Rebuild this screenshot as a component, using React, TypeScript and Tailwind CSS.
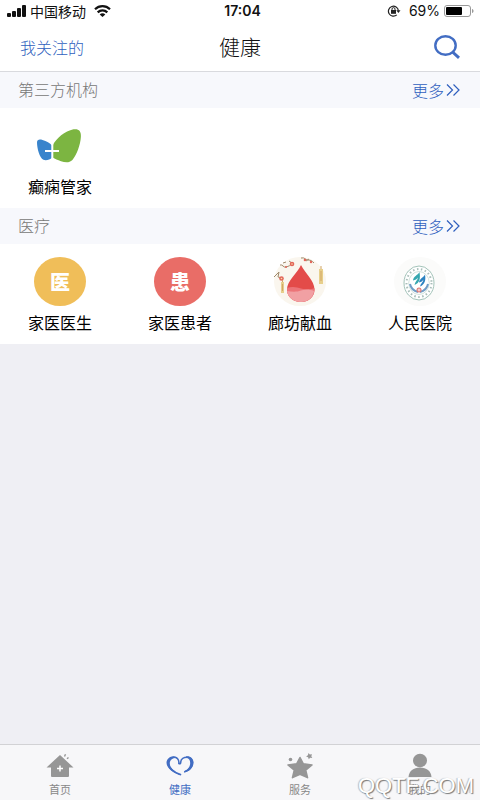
import React from "react";

function SignalIcon() {
  return (
    <svg width="19" height="12" viewBox="0 0 19 12" fill="#111" aria-hidden="true">
      <rect x="0" y="8" width="4" height="4" rx="1" />
      <rect x="5" y="6" width="4" height="6" rx="1" />
      <rect x="10" y="3" width="4" height="9" rx="1" />
      <rect x="15" y="0" width="4" height="12" rx="1" />
    </svg>
  );
}

function WifiIcon() {
  return (
    <svg width="17" height="12" viewBox="0 0 17 12" fill="none" stroke="#111" strokeWidth="2.200" aria-hidden="true">
      <path d="M1 4.200C5.200.1 11.800.1 16 4.200" />
      <path d="M3.700 7.400c2.700-2.700 6.900-2.700 9.600 0" />
      <path d="M8.500 12 5.700 9.400c1.500-1.500 4.100-1.500 5.600 0z" fill="#111" stroke="none" />
    </svg>
  );
}

function RotationLockIcon() {
  return (
    <svg width="14" height="12" viewBox="0 0 14 12" fill="none" stroke="#222" aria-hidden="true">
      <path d="M9.800 9.900A5 5 0 1 1 11.400 5.600" strokeWidth="1.200" />
      <path d="M9.300 5.200h4.200l-2.100 2.700z" fill="#222" stroke="none" />
      <rect x="4" y="5" width="5" height="3.800" fill="#222" stroke="none" />
      <path d="M5 5.300V4.100a1.500 1.500 0 0 1 3 0v1.200" />
    </svg>
  );
}

function BatteryIcon() {
  return (
    <svg width="30" height="12" viewBox="0 0 30 12" aria-hidden="true">
      <rect x=".5" y=".5" width="26" height="11" rx="2.500" fill="#fff" stroke="#999" />
      <rect x="2" y="2" width="16" height="8" rx="1" fill="#000" />
      <path d="M28 4c2 .5 2 3.500 0 4z" fill="#999" />
    </svg>
  );
}

function SearchIcon() {
  return (
    <svg width="26" height="24" viewBox="0 0 26 24" fill="none" stroke="#426dc3" aria-hidden="true">
      <ellipse cx="11.500" cy="10.500" rx="10.200" ry="9.300" strokeWidth="2.400" />
      <path d="m18 16.500 7 6.300" strokeWidth="3" />
    </svg>
  );
}

function ButterflyIcon() {
  return (
    <svg width="52" height="49" viewBox="0 0 52 49" aria-hidden="true">
      <g transform="translate(0 8)">
        <path d="M3 13.500c0-3 2.500-3.500 5.500-2.500 4 1 7.500 3 9.500 5.500v12c-2 2.300-6 3.400-8.600 2.300C5.500 29 3 19 3 13.500z" fill="#3984cc" />
        <path d="M18.700 16.500C22 9.500 31 2 39.500.3c5-.8 7.800 1.500 7.400 7.400-.6 8.300-4 18-8.500 23.300-3.300 3.300-7.300 2.600-11.400 1.200-3.300-1.100-6-2.300-8.300-3.700z" fill="#7cb541" />
        <path d="M11 22h14M18.300 14.500v15" stroke="#fff" strokeWidth="2" />
      </g>
    </svg>
  );
}

function Medallion({ char, tone }: { char: string; tone: string }) {
  return (
    <svg width="52" height="49" viewBox="0 0 52 49" aria-hidden="true">
      <ellipse cx="26" cy="24.500" rx="26" ry="24.500" fill={tone} />
      <text x="26" y="33" textAnchor="middle" fill="#fff" fontSize="20" fontWeight="900" fontFamily="'Noto Sans CJK SC', sans-serif">
        {char}
      </text>
    </svg>
  );
}

function BloodIcon() {
  return (
    <svg width="52" height="49" viewBox="0 0 52 49" fill="none" aria-hidden="true">
      <ellipse cx="26" cy="24.500" rx="26" ry="24.500" fill="#faf6ee" />
      <path d="M6 8c3-1 3 3 6 2s4-1 6-4l-3-2M9 6l3-1M27 1c4-1 4 2 7 2s4 1 6 3M32 4l3-2M0 20l5-5-1 5 4 1" stroke="#a08a6c" />
      <g fill="#e36559">
        <circle cx="18" cy="7" r="2.300" />
        <circle cx="7.500" cy="21.500" r="2.300" />
        <circle cx="31" cy="3" r="1.300" />
        <circle cx="37" cy="5" r="1.200" />
        <circle cx="12" cy="10" r="1" />
      </g>
      <circle cx="18" cy="7" r=".8" fill="#f6dfaa" />
      <circle cx="7.500" cy="21.500" r=".8" fill="#f6dfaa" />
      <path d="M7 25h3v11H7zM45 12h4v15h-4z" fill="#e7cf8b" />
      <path d="M47 9v3M47 14v10M8.500 23v2m0 2v7" stroke="#d3a667" />
      <path d="M27 8c4 8 13.500 15.500 13.500 24.500C40.500 40 34.500 45 27 45s-14-5-14-12.500C13 23.500 23.500 16 27 8z" fill="#e34b49" />
      <path d="M13 31c5-2 10-1 14 .5 5 1.300 9 1.300 13.500-.5v2C40 40.500 34 45 27 45s-14-4.500-14-12z" fill="#ec7478" />
      <path d="M13 34c6 1 10 1 14-.5 5-1.500 9-1 13 .5-1 7-6.500 11-13 11s-13-4-14-11z" fill="#f1a0a3" />
    </svg>
  );
}

function HospitalIcon() {
  return (
    <svg width="52" height="49" viewBox="0 0 52 49" fill="none" aria-hidden="true">
      <ellipse cx="26" cy="24.500" rx="26" ry="24.500" fill="#fbfbfa" />
      <ellipse cx="25" cy="26" rx="15" ry="17" fill="#fff" stroke="#a3c3b9" />
      <ellipse cx="25" cy="26" rx="12.500" ry="14" stroke="#a9beb9" strokeWidth="2" strokeDasharray="1.500 2.500" />
      <ellipse cx="25" cy="26" rx="10.300" ry="11.500" stroke="#bfd5cd" strokeWidth=".7" />
      <path d="M25.500 15c-2 3.500-6 4-6.500 8.500 2.500-.5 4-1.500 5-3-.5 3-3 4-3.500 7.500 5.500-2 6-7 5-13z" fill="#36a7af" />
      <path d="M31 17.500c-2 3.500-5.500 4-6 8 2.500-.5 3.500-1.500 4.500-3-.5 3-3 4-3.500 7 5-2 6-6.500 5-12z" fill="#2b82c0" />
      <path d="M16 27c1 5 4 7 8 8M34 27c-1 5-4 7-8 8" stroke="#6f9cc6" strokeWidth="2" />
      <circle cx="25" cy="33" r="2.500" fill="#dd7470" />
      <path d="M25 31.500v3M23.500 33h3" stroke="#fff" strokeWidth=".8" />
    </svg>
  );
}

function HomeIcon() {
  return (
    <svg width="28" height="26" viewBox="0 0 28 26" aria-hidden="true">
      <path d="M14 2 .5 14.500H5V23q0 1 1 1h16q1 0 1-1v-8.500h4.500z" fill="#969696" />
      <path d="M14 12.500v6M11 15.500h6" stroke="#fff" strokeWidth="1.500" />
      <path d="m18.500 3.500 1-2.200M21 5.800l1.500-1.300" stroke="#969696" strokeWidth="1.400" />
    </svg>
  );
}

function HeartIcon() {
  return (
    <svg width="28" height="26" viewBox="0 0 28 26" fill="none" stroke="#426dc3" strokeLinecap="round" aria-hidden="true">
      <path d="M14.500 21.500C8 19.500 2 15 2 9.800 2 6.500 4.600 4.300 7.700 4.300c3.200 0 5.400 2 5.300 6.200" strokeWidth="1.600" />
      <path
        d="M14.500 22.500C8 20.300.5 15.500.5 9.800.5 6 4 3.200 7.500 3.200c2 0 3.500.7 4.600 2C6.500 4 3.800 7 3.800 10.500c0 4.400 5.200 8.600 10.700 11z"
        fill="#426dc3"
        stroke="none"
      />
      <path d="M13 10.500c1.300.7 1.800-.2 1.700-1.500C15 6 18 4.300 21 4.300c3.300 0 5.500 2.200 5.500 5.200 0 4.500-3.500 8-7.500 9" strokeWidth="1.600" />
      <path
        d="M20 3.500c4-.8 7.500 2 7.500 6 0 5.200-4.500 9.300-9 10-.8 0-.8-1 0-1.300 3.500-1.500 5.700-4.700 5.700-8.200 0-3-1.200-5-4.200-5z"
        fill="#426dc3"
        stroke="none"
      />
    </svg>
  );
}

function StarIcon() {
  return (
    <svg width="28" height="26" viewBox="0 0 28 26" fill="#969696" aria-hidden="true">
      <path
        d="m14 4.500 3.300 6.300 8.700 1.200-6.300 5.100 1.800 7.500L14 21.200l-7.500 3.400L8.300 17.100 2 12l8.700-1.200z"
        stroke="#969696"
        strokeWidth="1.600"
        strokeLinejoin="round"
      />
      <circle cx="4.500" cy="6.500" r="1.800" />
      <path d="m22.500 0 1.300 1.500 2.200-.2-.7 1.900 1 1.700-2.200-.2-1.300 1.600-.7-2-2-.8 1.800-1.300z" />
    </svg>
  );
}

function PersonIcon() {
  return (
    <svg width="28" height="26" viewBox="0 0 28 26" fill="#969696" aria-hidden="true">
      <ellipse cx="14" cy="7.500" rx="7" ry="6.700" />
      <path d="M2.500 24C3 18 7.500 14.500 14 14.500S25 18 25.500 24z" />
    </svg>
  );
}

type Entry = { name: string; icon: React.ReactNode };

function Section({ title, entries }: { title: string; entries: Entry[] }) {
  return (
    <section>
      <div className="flex h-9 items-center justify-between bg-[#f7f8fc] pb-0.5 pl-[18px] pr-5">
        <h2 className="text-base font-light text-[#777]">{title}</h2>
        <a href="#more" className="flex items-center gap-0.5 pt-0.5 text-base font-light text-[#2f5fbe]">
          更多
          <svg width="14" height="12" viewBox="0 0 14 12" fill="none" stroke="currentColor" strokeWidth="1.200" aria-hidden="true">
            <path d="m1 .5 5.500 5.500L1 11.500M7.500.5 13 6l-5.500 5.500" />
          </svg>
        </a>
      </div>
      <div className="grid grid-cols-4 bg-white pt-[13px] pb-[10px]">
        {entries.map((entry) => (
          <a key={entry.name} href="#entry" className="flex flex-col items-center gap-1 text-base text-black">
            {entry.icon}
            <span>{entry.name}</span>
          </a>
        ))}
      </div>
    </section>
  );
}

const partners: Entry[] = [{ name: "癫痫管家", icon: <ButterflyIcon /> }];

const medical: Entry[] = [
  { name: "家医医生", icon: <Medallion char="医" tone="#f0be59" /> },
  { name: "家医患者", icon: <Medallion char="患" tone="#e96d67" /> },
  { name: "廊坊献血", icon: <BloodIcon /> },
  { name: "人民医院", icon: <HospitalIcon /> },
];

const tabs = [
  { name: "首页", icon: <HomeIcon />, active: false },
  { name: "健康", icon: <HeartIcon />, active: true },
  { name: "服务", icon: <StarIcon />, active: false },
  { name: "我的", icon: <PersonIcon />, active: false },
];

export default function App() {
  return (
    <div className="relative flex min-h-screen flex-col bg-[#efeff4] font-['Noto_Sans_CJK_SC',sans-serif]">
      <div className="grid h-[22px] grid-cols-3 items-center bg-white pl-[7px] pr-1.5 text-sm text-[#111]">
        <div className="flex items-center gap-1">
          <SignalIcon />
          <span className="mr-1 leading-5">中国移动</span>
          <WifiIcon />
        </div>
        <span className="pl-1 text-center font-['Inter',sans-serif] font-semibold">17:04</span>
        <div className="flex items-center justify-end gap-1 font-['Inter',sans-serif]">
          <RotationLockIcon />
          <span className="ml-1">69%</span>
          <BatteryIcon />
        </div>
      </div>

      <header className="grid h-[50px] grid-cols-3 items-center border-b border-[#d9dade] bg-white px-5">
        <a href="#following" className="text-base font-light text-[#2f5fbe]">我关注的</a>
        <h1 className="text-center text-[21px] font-light text-[#111]">健康</h1>
        <button type="button" aria-label="搜索" className="justify-self-end">
          <SearchIcon />
        </button>
      </header>

      <main className="flex-1">
        <Section title="第三方机构" entries={partners} />
        <Section title="医疗" entries={medical} />
      </main>

      <nav className="grid h-14 grid-cols-4 border-t border-[#d2d2d5] bg-[#f7f7f9] pt-2">
        {tabs.map((tab) => (
          <a
            key={tab.name}
            href="#tab"
            className={`flex flex-col items-center gap-0.5 text-[11px] leading-4 ${tab.active ? "text-[#426dc3]" : "text-[#888]"}`}
          >
            {tab.icon}
            <span>{tab.name}</span>
          </a>
        ))}
      </nav>

      <span className="pointer-events-none absolute right-1.5 bottom-0 font-['Liberation_Sans',sans-serif] text-[22px] leading-7 text-white [text-shadow:1px_1px_1px_#777,-1px_0_1px_#bbb]">
        QQTF.COM
      </span>
    </div>
  );
}
